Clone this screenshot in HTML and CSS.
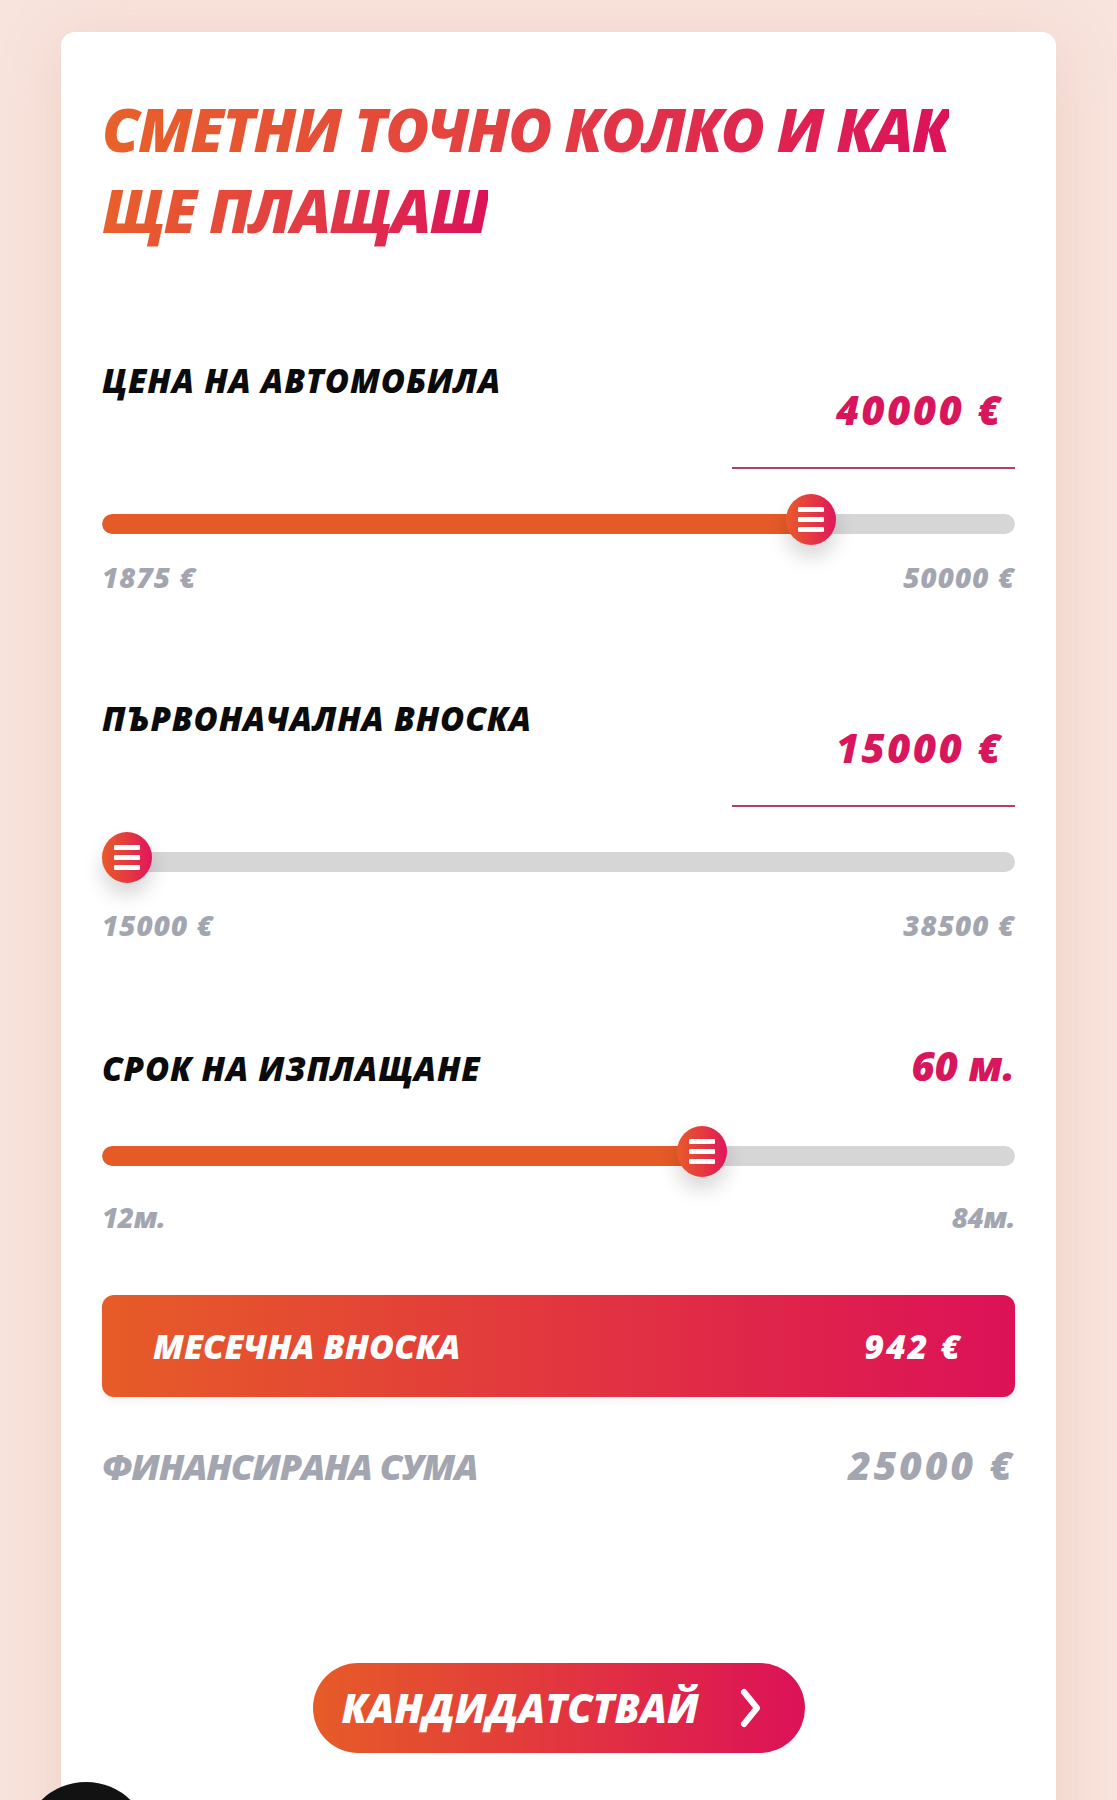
FILE: index.html
```html
<!DOCTYPE html>
<html lang="bg">
<head>
<meta charset="utf-8">
<title>Калкулатор</title>
<link rel="stylesheet" href="styles.css">
</head>
<body>
<main class="card">
  <h1 class="title"><span class="title-text">СМЕТНИ ТОЧНО КОЛКО И КАК<br>ЩЕ ПЛАЩАШ</span></h1>

  <section class="field field-first">
    <div class="field-head">
      <h2 class="field-label">ЦЕНА НА АВТОМОБИЛА</h2>
      <div class="value-box"><span class="field-value">40000 €</span></div>
    </div>
    <div class="slider">
      <div class="track"><div class="fill" style="width: 709px"></div></div>
      <div class="thumb" style="left: 684px"><span></span><span></span><span></span></div>
    </div>
    <div class="range range-tight"><span>1875 €</span><span>50000 €</span></div>
  </section>

  <section class="field">
    <div class="field-head">
      <h2 class="field-label">ПЪРВОНАЧАЛНА ВНОСКА</h2>
      <div class="value-box"><span class="field-value">15000 €</span></div>
    </div>
    <div class="slider">
      <div class="track"><div class="fill" style="width: 0px"></div></div>
      <div class="thumb" style="left: 0px"><span></span><span></span><span></span></div>
    </div>
    <div class="range"><span>15000 €</span><span>38500 €</span></div>
  </section>

  <section class="field field-inline">
    <div class="field-head field-head-inline">
      <h2 class="field-label">СРОК НА ИЗПЛАЩАНЕ</h2>
      <span class="field-value">60 м.</span>
    </div>
    <div class="slider slider-inline">
      <div class="track"><div class="fill" style="width: 600px"></div></div>
      <div class="thumb" style="left: 575px"><span></span><span></span><span></span></div>
    </div>
    <div class="range range-inline"><span>12м.</span><span>84м.</span></div>
  </section>

  <div class="monthly">
    <span class="monthly-label">МЕСЕЧНА ВНОСКА</span>
    <span class="monthly-value">942 €</span>
  </div>

  <div class="financed">
    <span class="financed-label">ФИНАНСИРАНА СУМА</span>
    <span class="financed-value">25000 €</span>
  </div>

  <div class="cta-wrap">
    <button class="cta" type="button">
      <span class="cta-text">КАНДИДАТСТВАЙ</span>
      <svg class="cta-icon" width="26" height="40" viewBox="0 0 26 40" aria-hidden="true">
        <path d="M7 4 L20 20 L7 36" fill="none" stroke="#fff" stroke-width="6" stroke-linecap="round" stroke-linejoin="round"/>
      </svg>
    </button>
  </div>
</main>
<div class="chat-bubble" aria-hidden="true"></div>
</body>
</html>
```

FILE: styles.css
```css
html, body {
  margin: 0;
  padding: 0;
}

body {
  background: #f8e4dd;
  font-family: "Open Sans", "Noto Sans", "DejaVu Sans", sans-serif;
  font-style: italic;
  min-height: 1800px;
  overflow: hidden;
}

.card {
  margin: 32px 0 0 61px;
  width: 995px;
  box-sizing: border-box;
  background: #ffffff;
  border-radius: 14px;
  padding: 57px 41px 200px;
  box-shadow: 0 10px 60px rgba(214, 150, 130, 0.28);
}

.title {
  margin: 0;
  font-size: 60px;
  line-height: 81px;
  font-weight: 800;
  letter-spacing: -1.9px;
}

.title-text {
  background: linear-gradient(90deg, #e8612a 0%, #e23a45 55%, #dc1259 100%);
  -webkit-background-clip: text;
  background-clip: text;
  color: transparent;
  -webkit-box-decoration-break: clone;
  box-decoration-break: clone;
}

.field {
  margin-top: 106px;
}

.field-first {
  margin-top: 110px;
}

.field-inline {
  margin-top: 102px;
}

.field-head {
  display: flex;
  justify-content: space-between;
  align-items: flex-start;
}

.field-head-inline {
  align-items: baseline;
}

.field-label {
  margin: 0;
  font-size: 33px;
  line-height: 40px;
  font-weight: 800;
  color: #0b0b0b;
  letter-spacing: 0.8px;
}

.value-box {
  width: 283px;
  box-sizing: border-box;
  padding: 26px 12px 34px 0;
  border-bottom: 2px solid #b23e71;
  text-align: right;
}

.field-value {
  display: inline-block;
  font-size: 40px;
  line-height: 46px;
  font-weight: 800;
  color: #d8165b;
  letter-spacing: 2.5px;
}

.field-head-inline .field-value {
  letter-spacing: 0px;
}

.slider {
  position: relative;
  height: 50px;
  box-sizing: border-box;
  padding-top: 20px;
  margin-top: 25px;
}

.slider-inline {
  margin-top: 37px;
}

.track {
  height: 20px;
  border-radius: 10px;
  background: #d6d6d6;
  overflow: hidden;
}

.fill {
  height: 100%;
  background: #e55b27;
  border-radius: 10px 0 0 10px;
}

.thumb {
  position: absolute;
  top: 0;
  width: 50px;
  height: 51px;
  border-radius: 50%;
  background: linear-gradient(90deg, #e95a2b 0%, #e43a40 50%, #e0165c 100%);
  box-shadow: 0 12px 20px rgba(0, 0, 0, 0.16);
  display: flex;
  flex-direction: column;
  align-items: center;
  justify-content: center;
  gap: 5px;
}

.thumb span {
  display: block;
  width: 26px;
  height: 5px;
  border-radius: 1px;
  background: #ffffff;
}

.range {
  display: flex;
  justify-content: space-between;
  margin-top: 27px;
  font-size: 28px;
  line-height: 32px;
  font-weight: 800;
  color: #a3a6b1;
  letter-spacing: 1px;
}

.range-tight {
  margin-top: 17px;
}

.range-inline {
  margin-top: 25px;
  letter-spacing: -0.5px;
}

.monthly {
  margin-top: 62px;
  height: 102px;
  box-sizing: border-box;
  padding: 0 53px 0 51px;
  border-radius: 12px;
  background: linear-gradient(90deg, #e65c27 0%, #e2363f 50%, #dc1158 100%);
  box-shadow: 0 4px 10px rgba(0, 0, 0, 0.06);
  display: flex;
  align-items: center;
  justify-content: space-between;
  color: #ffffff;
  font-size: 34px;
  line-height: 34px;
  font-weight: 800;
}

.monthly-value {
  letter-spacing: 2px;
}

.financed {
  margin-top: 45px;
  display: flex;
  justify-content: space-between;
  align-items: baseline;
  font-size: 36px;
  line-height: 46px;
  font-weight: 800;
  color: #a3a6b1;
}

.financed-label {
  letter-spacing: -1.2px;
}

.financed-value {
  font-size: 39px;
  letter-spacing: 3px;
}

.cta-wrap {
  display: flex;
  justify-content: center;
  margin-top: 173px;
}

.cta {
  width: 492px;
  height: 90px;
  border: 0;
  border-radius: 45px;
  padding: 0 0 0 29px;
  background: linear-gradient(90deg, #e65c27 0%, #e2363f 50%, #dc1158 100%);
  display: flex;
  align-items: center;
  gap: 38px;
  color: #ffffff;
  font-family: inherit;
  font-style: italic;
  font-size: 40px;
  font-weight: 800;
  cursor: pointer;
}

.cta-text {
  line-height: 1;
}

.cta-icon {
  display: block;
  flex: none;
}

.chat-bubble {
  position: fixed;
  left: 22px;
  bottom: -110px;
  width: 128px;
  height: 128px;
  border-radius: 50%;
  background: #121212;
}
```
